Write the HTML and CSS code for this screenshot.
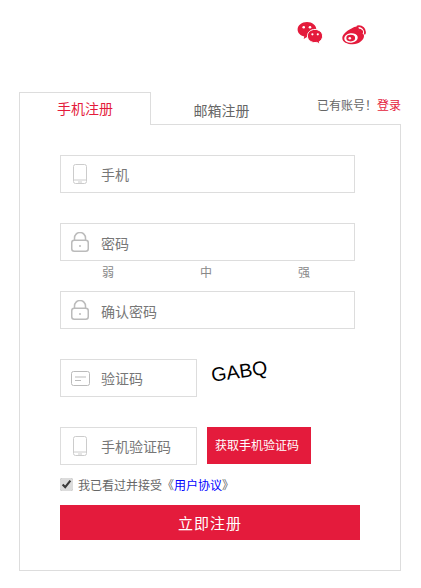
FILE: index.html
```html
<!DOCTYPE html>
<html>

<head>
    <title>注册</title>
    <link rel="stylesheet" href="styles.css">
</head>
<body>
    <div class="page">
        <div class="social">
            <svg class="wechat-icon" viewBox="0 0 26 22">
                <path d="M10 0c5.200 0 9.300 3.300 9.300 7.500 0 .5-.1 1-.2 1.500-3.800-.6-7.200 2-7.200 5.300 0 .2 0 .5.100.7-.7.100-1.300.1-2 .1l-3.300 1.900.6-2.500C3 13.500.6 10.800.6 7.500.6 3.300 4.800 0 10 0z" fill="#e41b3c"/>
                <path d="M18 7.400c4.200 0 7.600 3 7.600 6.700 0 2.300-1.300 4.300-3.300 5.500l.6 2.400-3.100-1.600c-.6.100-1.200.2-1.800.2-4.200 0-7.600-3-7.600-6.700s3.400-6.500 7.600-6.500z" fill="#e41b3c" stroke="#fff" stroke-width="1"/>
                <circle cx="6.700" cy="5.300" r="1.300" fill="#fff"/>
                <circle cx="13" cy="5.300" r="1.300" fill="#fff"/>
                <circle cx="15.400" cy="12.300" r="1.100" fill="#fff"/>
                <circle cx="20.800" cy="12.300" r="1.100" fill="#fff"/>
            </svg>
            <svg class="weibo-icon" viewBox="0 0 25 20">
                <path d="M9.500 3.500c3-2.200 6-2.600 7-1.300.6.900.4 2 0 3.100 2.200-.8 3.800-.5 4.400.6.400.8.200 1.800-.4 2.600 1 .4 1.500 1.300 1.500 2.500 0 3.800-5 8.300-11.200 8.300C5 19.300.3 17 .3 13c0-3 4-7.200 9.200-9.500z" fill="#e41b3c"/>
                <ellipse cx="9" cy="13" rx="6.800" ry="4.800" fill="#fff" transform="rotate(-8 9 13)"/>
                <ellipse cx="8.700" cy="13.100" rx="4.400" ry="3.300" fill="#e41b3c"/>
                <circle cx="7.800" cy="13.300" r="1.300" fill="#fff"/>
                <path d="M15.500 1.300c4.500-.9 8.300 3 7.300 7.300" fill="none" stroke="#e41b3c" stroke-width="1.800" stroke-linecap="round"/>
                <path d="M16.800 4.500c2-.4 3.300 1.200 2.900 3" fill="none" stroke="#e41b3c" stroke-width="1.500" stroke-linecap="round"/>
            </svg>
        </div>

        <div class="tabs">
            <div class="tab tab-active">手机注册</div>
            <div class="tab tab-other">邮箱注册</div>
            <div class="login-hint">已有账号！<a class="login-link">登录</a></div>
        </div>

        <div class="panel">
            <div class="field row">
                <span class="field-icon">
                    <svg class="icon-phone" viewBox="0 0 14 20">
                        <rect x="0.500" y="0.500" width="13" height="19" rx="2" fill="none" stroke="#ccc"/>
                        <path d="M.5 16h13M5 18h4" fill="none" stroke="#ccc"/>
                    </svg>
                </span>
                <span class="field-text">手机</span>
            </div>

            <div class="field">
                <span class="field-icon">
                    <svg class="icon-lock" viewBox="0 0 18 20">
                        <rect x="0.750" y="8.250" width="16.500" height="11" rx="2.500" fill="none" stroke="#bbb" stroke-width="1.500"/>
                        <path d="M3.500 8.500V6a5.500 5.500 0 0 1 11 0v2.500" fill="none" stroke="#bbb" stroke-width="1.500"/>
                        <path d="M9 13v2" stroke="#bbb" stroke-width="1.500"/>
                    </svg>
                </span>
                <span class="field-text field-text-low">密码</span>
            </div>
            <div class="strength">
                <span>弱</span>
                <span>中</span>
                <span>强</span>
            </div>

            <div class="field row">
                <span class="field-icon">
                    <svg class="icon-lock" viewBox="0 0 18 20">
                        <rect x="0.750" y="8.250" width="16.500" height="11" rx="2.500" fill="none" stroke="#bbb" stroke-width="1.500"/>
                        <path d="M3.500 8.500V6a5.500 5.500 0 0 1 11 0v2.500" fill="none" stroke="#bbb" stroke-width="1.500"/>
                        <path d="M9 13v2" stroke="#bbb" stroke-width="1.500"/>
                    </svg>
                </span>
                <span class="field-text field-text-low">确认密码</span>
            </div>

            <div class="code-row row">
                <div class="field field-short">
                    <span class="field-icon">
                        <svg class="icon-card" viewBox="0 0 19 15">
                            <rect x="0.500" y="0.500" width="18" height="14" rx="2" fill="none" stroke="#bbb"/>
                            <path d="M4 6h11M4 9.500h6" fill="none" stroke="#bbb"/>
                        </svg>
                    </span>
                    <span class="field-text">验证码</span>
                </div>
                <div class="captcha">GABQ</div>
            </div>

            <div class="code-row">
                <div class="field field-short">
                    <span class="field-icon">
                        <svg class="icon-phone" viewBox="0 0 14 20">
                            <rect x="0.500" y="0.500" width="13" height="19" rx="2" fill="none" stroke="#ccc"/>
                            <path d="M.5 16h13M5 18h4" fill="none" stroke="#ccc"/>
                        </svg>
                    </span>
                    <span class="field-text">手机验证码</span>
                </div>
                <div class="get-code">获取手机验证码</div>
            </div>

            <label class="agree">
                <input type="checkbox" class="agree-check" checked>
                <span>我已看过并接受《<a class="agree-link">用户协议</a>》</span>
            </label>

            <div class="submit">立即注册</div>
        </div>
    </div>
</body>
</html>
```

FILE: styles.css
```css
body {
    margin: 0;
    padding: 0;
    background-color: #fff;
    font-family: "Liberation Sans", "Noto Sans CJK SC", sans-serif;
}
.page {
    width: 382px;
    margin-left: 19px;
}
.social {
    display: flex;
    justify-content: flex-end;
    align-items: flex-start;
    gap: 19px;
    height: 70px;
    padding-top: 22px;
    padding-right: 34px;
}
.wechat-icon {
    width: 26px;
    height: 22px;
}
.weibo-icon {
    width: 25px;
    height: 20px;
    margin-top: 3px;
}
.tabs {
    display: flex;
    height: 33px;
    margin-bottom: -1px;
}
.tab {
    font-size: 14px;
    text-align: center;
}
.tab-active {
    position: relative;
    z-index: 1;
    box-sizing: border-box;
    width: 132px;
    height: 33px;
    padding-top: 5px;
    background-color: #fff;
    border: 1px solid #ddd;
    border-bottom: none;
    color: #e41b3c;
}
.tab-other {
    width: 141px;
    padding-top: 8px;
    color: #666;
}
.login-hint {
    margin-left: auto;
    padding-top: 4px;
    font-size: 12px;
    color: #666;
}
.login-link {
    color: #e41b3c;
}
.panel {
    box-sizing: border-box;
    width: 382px;
    padding: 30px 40px 30px 40px;
    border: 1px solid #ddd;
}
.row {
    margin-bottom: 30px;
}
.field {
    box-sizing: border-box;
    display: flex;
    align-items: center;
    width: 295px;
    height: 38px;
    border: 1px solid #ddd;
}
.field-short {
    width: 137px;
}
.field-icon {
    display: flex;
    justify-content: center;
    align-items: center;
    width: 38px;
    height: 100%;
    margin-right: 2px;
}
.field-text {
    font-size: 14px;
    color: #777;
}
.field-text-low {
    margin-top: 2px;
}
.icon-phone {
    width: 14px;
    height: 20px;
}
.icon-lock {
    width: 18px;
    height: 20px;
}
.icon-card {
    width: 19px;
    height: 15px;
}
.strength {
    display: grid;
    grid-template-columns: 98px 98px 98px;
    height: 30px;
    padding-left: 42px;
    font-size: 12px;
    line-height: 25px;
    color: #888;
}
.code-row {
    display: flex;
    align-items: flex-start;
}
.captcha {
    margin-left: 14px;
    font-size: 19.500px;
    line-height: 24px;
    color: #000;
    transform: rotate(-8deg);
}
.get-code {
    box-sizing: border-box;
    width: 104px;
    height: 37px;
    margin-left: 10px;
    padding-left: 8px;
    background-color: #e41b3c;
    color: #fff;
    font-size: 12px;
    line-height: 38px;
}
.agree {
    display: flex;
    align-items: center;
    height: 38px;
    padding-bottom: 2px;
    font-size: 12px;
    color: #666;
}
.agree-check {
    width: 13px;
    height: 13px;
    margin: 0 5px 0 0;
    accent-color: #dcdcdc;
}
.agree-link {
    color: #00f;
}
.submit {
    width: 300px;
    height: 35px;
    background-color: #e41b3c;
    color: #fff;
    font-size: 15px;
    letter-spacing: 1px;
    line-height: 37px;
    text-align: center;
}
```
